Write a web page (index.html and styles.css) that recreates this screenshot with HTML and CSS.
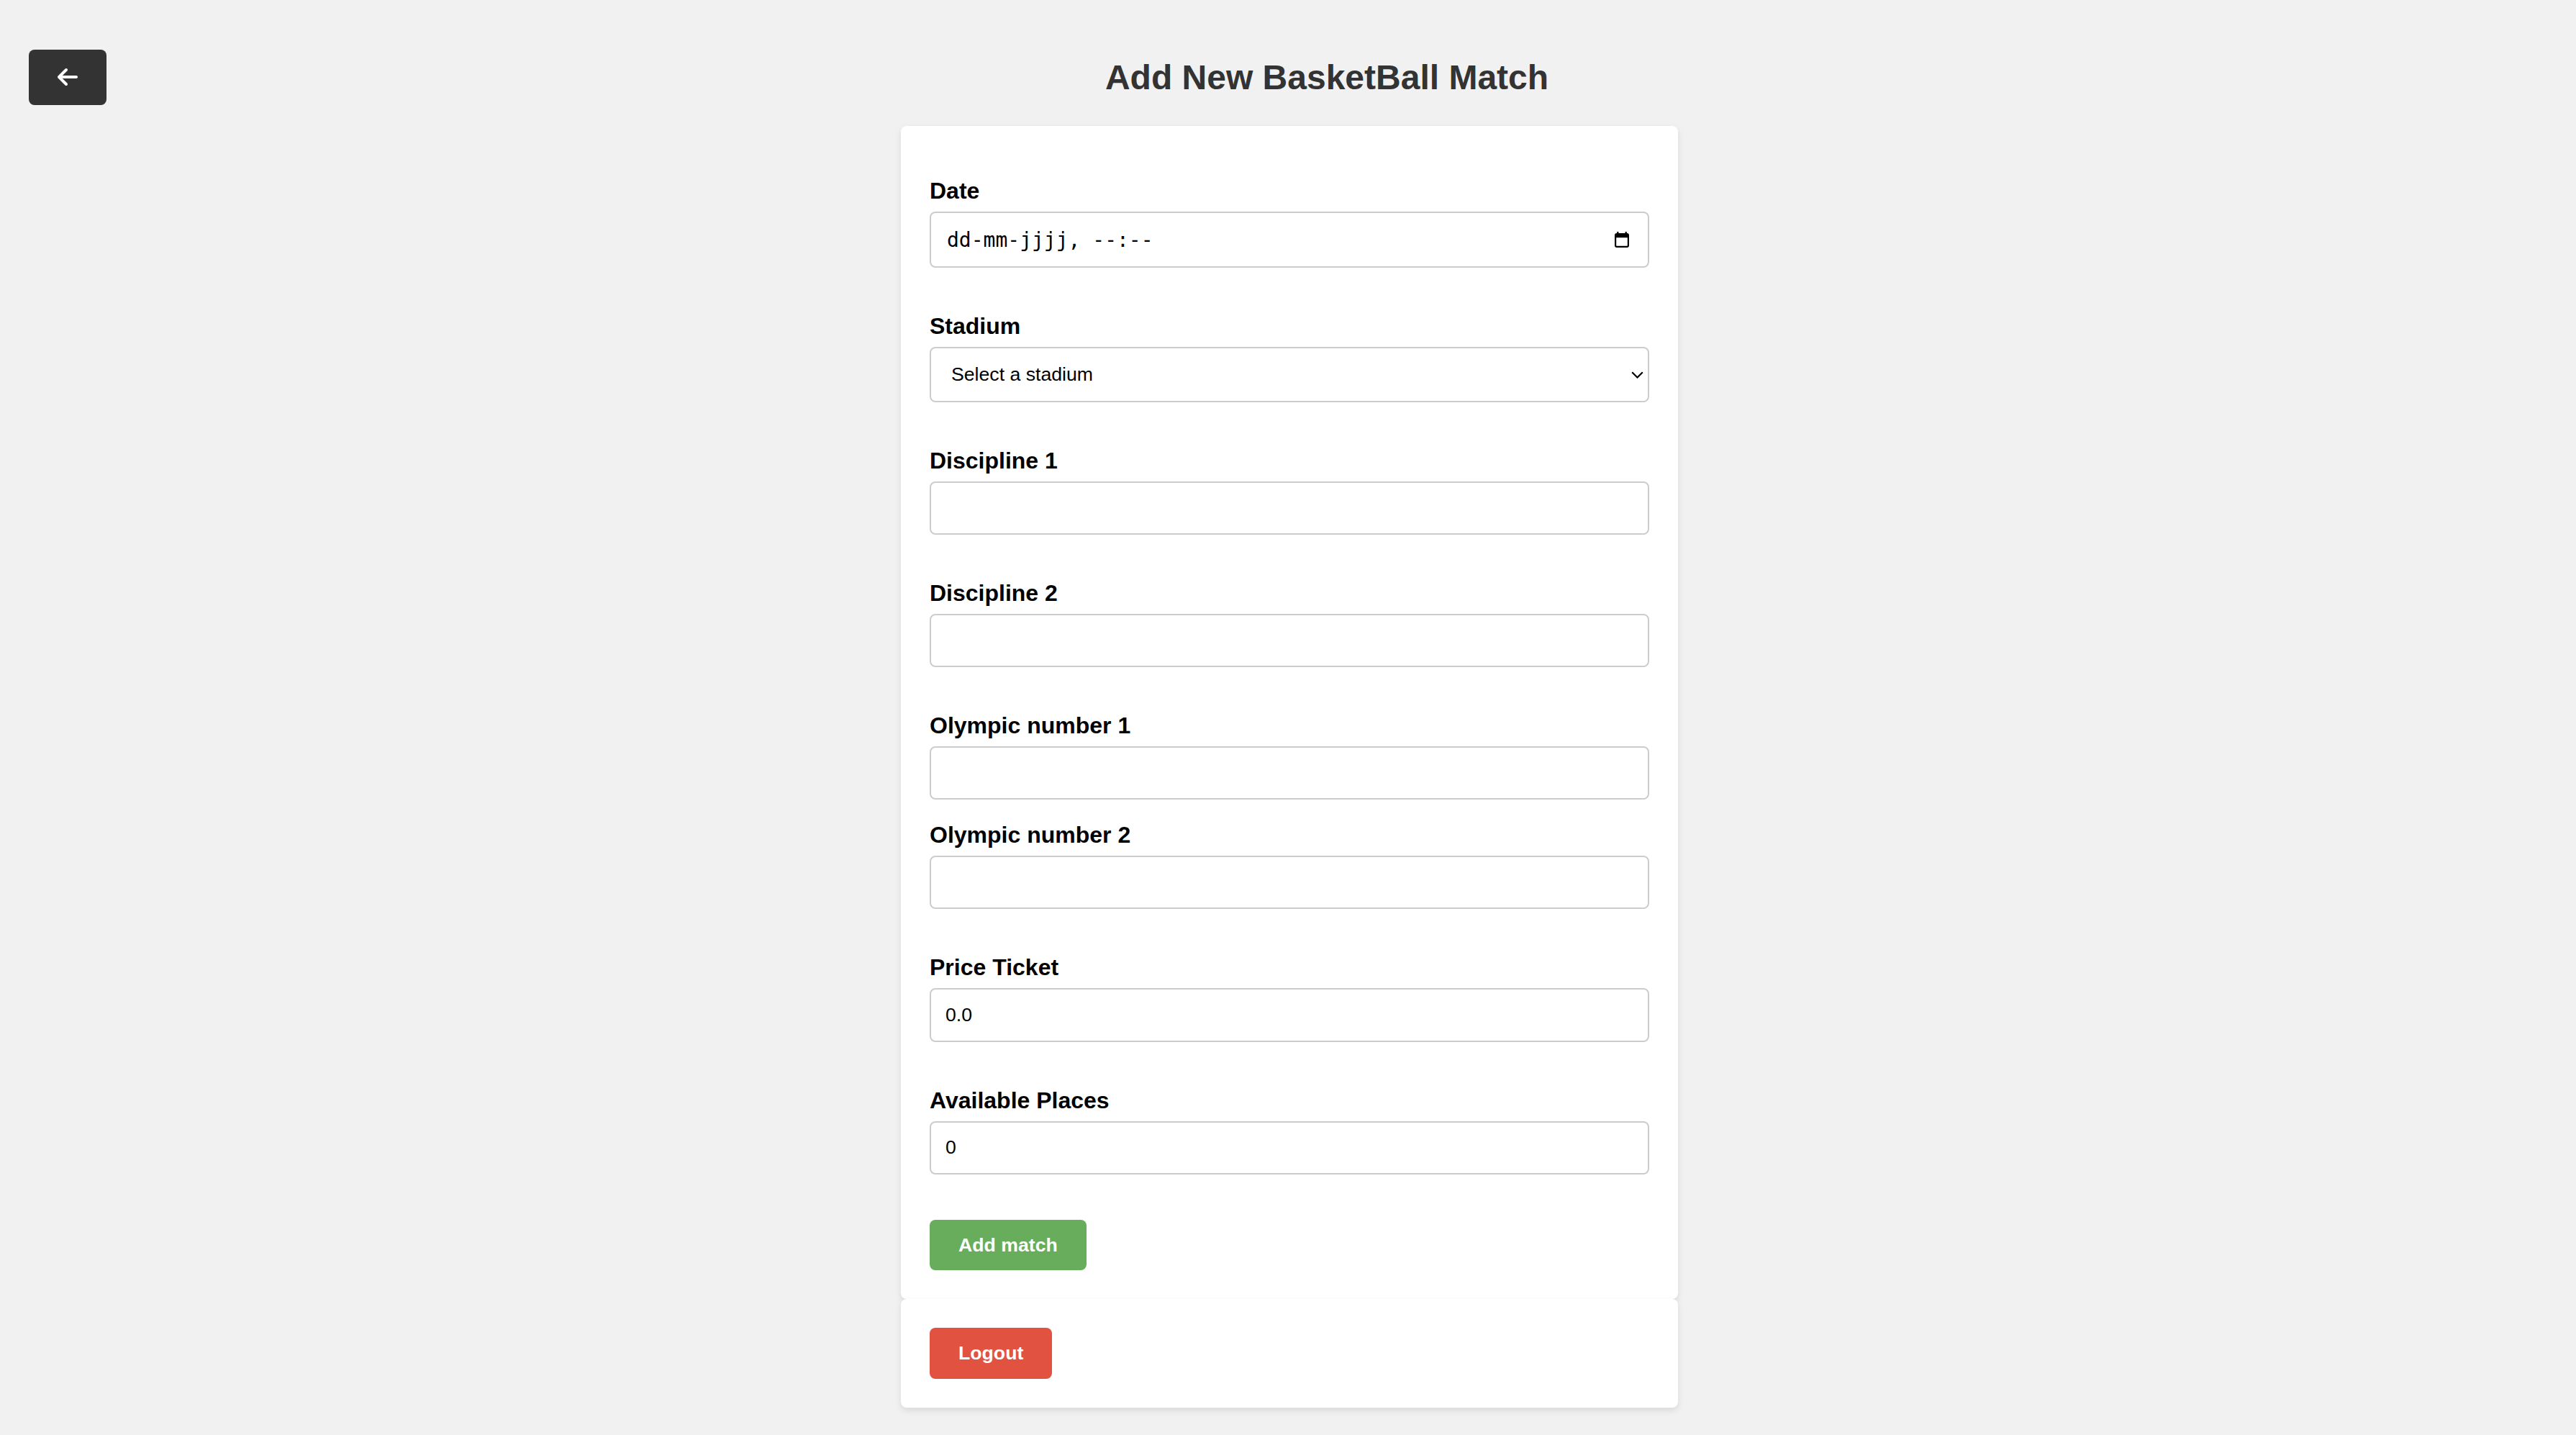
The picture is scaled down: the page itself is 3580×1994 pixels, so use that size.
FILE: index.html
```html
<!DOCTYPE html>
<html lang="en">
<head>
<meta charset="utf-8">
<title>Add New BasketBall Match</title>
<link rel="stylesheet" href="styles.css">
</head>
<body>
<div class="page">
  <header class="header">
    <button class="back-btn" type="button" aria-label="Back">
      <svg class="back-icon" viewBox="0 0 448 512" width="28" height="32" aria-hidden="true"><path fill="#fff" d="M9.4 233.4c-12.5 12.5-12.5 32.8 0 45.3l160 160c12.5 12.5 32.8 12.5 45.3 0s12.5-32.8 0-45.3L109.2 288 416 288c17.7 0 32-14.3 32-32s-14.3-32-32-32l-306.7 0L214.6 118.6c12.5-12.5 12.5-32.8 0-45.3s-32.8-12.5-45.3 0l-160 160z"/></svg>
    </button>
    <h2 class="title">Add New BasketBall Match</h2>
  </header>

  <main class="content">
    <form class="card">
      <div class="group">
        <label class="label">Date</label>
        <div class="field date-field">
          <span class="date-text">dd-mm-jjjj, --:--</span>
          <svg class="cal-icon" viewBox="0 0 10 11" width="20" height="22" aria-hidden="true">
            <rect x="1.6" y="0" width="1.1" height="2" fill="#000"/>
            <rect x="7.3" y="0" width="1.1" height="2" fill="#000"/>
            <rect x="0.55" y="1.55" width="8.9" height="8.9" rx="0.9" fill="none" stroke="#000" stroke-width="1.1"/>
            <rect x="0.5" y="1.5" width="9" height="2.6" fill="#000"/>
          </svg>
        </div>
      </div>

      <div class="group">
        <label class="label">Stadium</label>
        <div class="select-wrap">
          <select class="field select">
            <option>Select a stadium</option>
          </select>
          <svg class="chevron" viewBox="0 0 17 10" width="17" height="10" aria-hidden="true"><path d="M1.2 1.2 L8.5 8.5 L15.8 1.2" fill="none" stroke="#000" stroke-width="2.2"/></svg>
        </div>
      </div>

      <div class="group">
        <label class="label">Discipline 1</label>
        <input class="field text" type="text">
      </div>

      <div class="group">
        <label class="label">Discipline 2</label>
        <input class="field text" type="text">
      </div>

      <div class="group">
        <label class="label">Olympic number 1</label>
        <input class="field text" type="text">
        <label class="label">Olympic number 2</label>
        <input class="field text" type="text">
      </div>

      <div class="group">
        <label class="label">Price Ticket</label>
        <input class="field text" type="text" value="0.0">
      </div>

      <div class="group">
        <label class="label">Available Places</label>
        <input class="field text" type="text" value="0">
      </div>

      <div class="group">
        <button class="btn btn-green" type="button">Add match</button>
      </div>
    </form>

    <div class="card card-footer">
      <button class="btn btn-red" type="button">Logout</button>
    </div>
  </main>
</div>
</body>
</html>
```

FILE: styles.css
```css
* {
  box-sizing: border-box;
}

html, body {
  margin: 0;
  padding: 0;
}

body {
  background: #f1f1f1;
  font-family: "Liberation Sans", Arial, Helvetica, sans-serif;
  color: #000;
}

.page {
  padding: 40px;
}

.header {
  display: flex;
  align-items: center;
}

.back-btn {
  display: flex;
  align-items: center;
  justify-content: center;
  width: 108px;
  height: 77px;
  padding: 0;
  border: none;
  border-radius: 8px;
  background: #333333;
  cursor: pointer;
  flex: none;
}

.back-icon {
  display: block;
}

.title {
  flex: 1;
  margin: 39.84px 0;
  text-align: center;
  font-size: 48px;
  font-weight: bold;
  color: #333333;
}

.content {
  display: block;
  padding-left: 4px;
}

.card {
  display: flex;
  flex-direction: column;
  width: 1080px;
  margin: 0 auto;
  padding: 40px;
  background: #ffffff;
  border-radius: 8px;
  box-shadow: 0 4px 10px rgba(0, 0, 0, 0.1);
}

.group {
  display: flex;
  flex-direction: column;
  padding-top: 32px;
}

.label {
  display: block;
  font-size: 32px;
  line-height: 37px;
  font-weight: bold;
  color: #000;
  margin-bottom: 10px;
}

.field {
  display: block;
  width: 100%;
  margin: 0 0 31px 0;
  border: 2px solid #cccccc;
  border-radius: 8px;
  background: #ffffff;
  font-family: "Liberation Sans", Arial, Helvetica, sans-serif;
  font-size: 26.67px;
  color: #000;
}

.text {
  padding: 20px 20px;
  line-height: 30.2px;
  height: 74.2px;
  outline: none;
}

.date-field {
  display: flex;
  align-items: center;
  justify-content: space-between;
  height: 78px;
  padding: 2px 26px 0 22px;
}

.date-text {
  font-family: "DejaVu Sans Mono", "Liberation Mono", monospace;
  font-size: 28px;
}

.cal-icon {
  display: block;
  margin-top: -2px;
}

.select-wrap {
  position: relative;
}

.select {
  appearance: none;
  -webkit-appearance: none;
  height: 77px;
  padding: 0 40px 0 28px;
  outline: none;
}

.chevron {
  position: absolute;
  right: 8px;
  top: 34px;
  pointer-events: none;
}

.btn {
  align-self: flex-start;
  padding: 20px 40px;
  border: none;
  border-radius: 8px;
  font-family: "Liberation Sans", Arial, Helvetica, sans-serif;
  font-size: 26.67px;
  line-height: 30.5px;
  font-weight: bold;
  color: #ffffff;
  cursor: pointer;
}

.btn-green {
  background: #67ad5b;
}

.btn-red {
  background: #e15241;
}
```
